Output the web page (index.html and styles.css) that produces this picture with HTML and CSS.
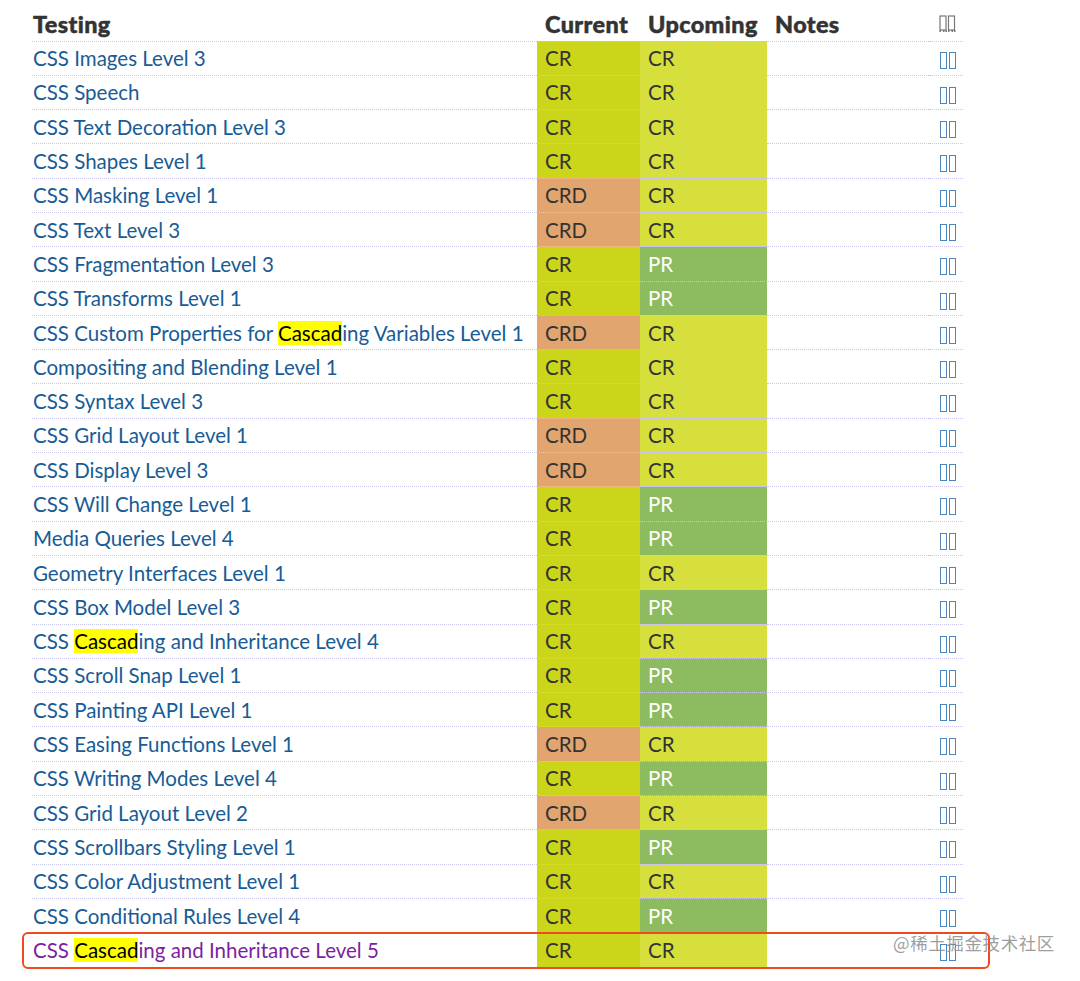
FILE: index.html
```html
<!DOCTYPE html>
<html>
<head>
<meta charset="utf-8">
<link rel="stylesheet" href="styles.css">
</head>
<body>
<div class="wrap">
<table class="specs">
<thead>
<tr><th class="c-name">Testing</th><th class="c-cur">Current</th><th class="c-up">Upcoming</th><th class="c-notes">Notes</th><th class="c-ico"><svg class="ico-h" width="17" height="18" viewBox="0 0 17 18"><rect x="1" y="1" width="6" height="14" fill="none" stroke="#777" stroke-width="1.2"/><rect x="9.5" y="1" width="6" height="14" fill="none" stroke="#777" stroke-width="1.2"/><g fill="#777"><rect x="0.5" y="15" width="1.5" height="2"/><rect x="4" y="15" width="1.5" height="2"/><rect x="6.5" y="15" width="1.5" height="2"/><rect x="9" y="15" width="1.5" height="2"/><rect x="12.5" y="15" width="1.5" height="2"/><rect x="15" y="15" width="1.5" height="2"/></g></svg></th></tr>
</thead>
<tbody>
<tr><td><a>CSS Images Level 3</a></td><td class="cur cr">CR</td><td class="up cr">CR</td><td></td><td class="ic"><i class="tofu"></i><i class="tofu"></i></td></tr>
<tr><td><a>CSS Speech</a></td><td class="cur cr">CR</td><td class="up cr">CR</td><td></td><td class="ic"><i class="tofu"></i><i class="tofu"></i></td></tr>
<tr><td><a>CSS Text Decoration Level 3</a></td><td class="cur cr">CR</td><td class="up cr">CR</td><td></td><td class="ic"><i class="tofu"></i><i class="tofu"></i></td></tr>
<tr><td><a>CSS Shapes Level 1</a></td><td class="cur cr">CR</td><td class="up cr">CR</td><td></td><td class="ic"><i class="tofu"></i><i class="tofu"></i></td></tr>
<tr><td><a>CSS Masking Level 1</a></td><td class="cur crd">CRD</td><td class="up cr">CR</td><td></td><td class="ic"><i class="tofu"></i><i class="tofu"></i></td></tr>
<tr><td><a>CSS Text Level 3</a></td><td class="cur crd">CRD</td><td class="up cr">CR</td><td></td><td class="ic"><i class="tofu"></i><i class="tofu"></i></td></tr>
<tr><td><a>CSS Fragmentation Level 3</a></td><td class="cur cr">CR</td><td class="up pr">PR</td><td></td><td class="ic"><i class="tofu"></i><i class="tofu"></i></td></tr>
<tr><td><a>CSS Transforms Level 1</a></td><td class="cur cr">CR</td><td class="up pr">PR</td><td></td><td class="ic"><i class="tofu"></i><i class="tofu"></i></td></tr>
<tr><td><a>CSS Custom Properties for <mark>Cascad</mark>ing Variables Level 1</a></td><td class="cur crd">CRD</td><td class="up cr">CR</td><td></td><td class="ic"><i class="tofu"></i><i class="tofu"></i></td></tr>
<tr><td><a>Compositing and Blending Level 1</a></td><td class="cur cr">CR</td><td class="up cr">CR</td><td></td><td class="ic"><i class="tofu"></i><i class="tofu"></i></td></tr>
<tr><td><a>CSS Syntax Level 3</a></td><td class="cur cr">CR</td><td class="up cr">CR</td><td></td><td class="ic"><i class="tofu"></i><i class="tofu"></i></td></tr>
<tr><td><a>CSS Grid Layout Level 1</a></td><td class="cur crd">CRD</td><td class="up cr">CR</td><td></td><td class="ic"><i class="tofu"></i><i class="tofu"></i></td></tr>
<tr><td><a>CSS Display Level 3</a></td><td class="cur crd">CRD</td><td class="up cr">CR</td><td></td><td class="ic"><i class="tofu"></i><i class="tofu"></i></td></tr>
<tr><td><a>CSS Will Change Level 1</a></td><td class="cur cr">CR</td><td class="up pr">PR</td><td></td><td class="ic"><i class="tofu"></i><i class="tofu"></i></td></tr>
<tr><td><a>Media Queries Level 4</a></td><td class="cur cr">CR</td><td class="up pr">PR</td><td></td><td class="ic"><i class="tofu"></i><i class="tofu"></i></td></tr>
<tr><td><a>Geometry Interfaces Level 1</a></td><td class="cur cr">CR</td><td class="up cr">CR</td><td></td><td class="ic"><i class="tofu"></i><i class="tofu"></i></td></tr>
<tr><td><a>CSS Box Model Level 3</a></td><td class="cur cr">CR</td><td class="up pr">PR</td><td></td><td class="ic"><i class="tofu"></i><i class="tofu"></i></td></tr>
<tr><td><a>CSS <mark>Cascad</mark>ing and Inheritance Level 4</a></td><td class="cur cr">CR</td><td class="up cr">CR</td><td></td><td class="ic"><i class="tofu"></i><i class="tofu"></i></td></tr>
<tr><td><a>CSS Scroll Snap Level 1</a></td><td class="cur cr">CR</td><td class="up pr">PR</td><td></td><td class="ic"><i class="tofu"></i><i class="tofu"></i></td></tr>
<tr><td><a>CSS Painting API Level 1</a></td><td class="cur cr">CR</td><td class="up pr">PR</td><td></td><td class="ic"><i class="tofu"></i><i class="tofu"></i></td></tr>
<tr><td><a>CSS Easing Functions Level 1</a></td><td class="cur crd">CRD</td><td class="up cr">CR</td><td></td><td class="ic"><i class="tofu"></i><i class="tofu"></i></td></tr>
<tr><td><a>CSS Writing Modes Level 4</a></td><td class="cur cr">CR</td><td class="up pr">PR</td><td></td><td class="ic"><i class="tofu"></i><i class="tofu"></i></td></tr>
<tr><td><a>CSS Grid Layout Level 2</a></td><td class="cur crd">CRD</td><td class="up cr">CR</td><td></td><td class="ic"><i class="tofu"></i><i class="tofu"></i></td></tr>
<tr><td><a>CSS Scrollbars Styling Level 1</a></td><td class="cur cr">CR</td><td class="up pr">PR</td><td></td><td class="ic"><i class="tofu"></i><i class="tofu"></i></td></tr>
<tr><td><a>CSS Color Adjustment Level 1</a></td><td class="cur cr">CR</td><td class="up cr">CR</td><td></td><td class="ic"><i class="tofu"></i><i class="tofu"></i></td></tr>
<tr><td><a>CSS Conditional Rules Level 4</a></td><td class="cur cr">CR</td><td class="up pr">PR</td><td></td><td class="ic"><i class="tofu"></i><i class="tofu"></i></td></tr>
<tr class="last"><td><a class="visited">CSS <mark>Cascad</mark>ing and Inheritance Level 5</a></td><td class="cur cr">CR</td><td class="up cr">CR</td><td></td><td class="ic"><i class="tofu"></i><i class="tofu"></i></td></tr>
</tbody>
</table>
<div class="callout"></div>
<div class="watermark">@稀土掘金技术社区</div>
</div>
</body>
</html>
```

FILE: styles.css
```css
html, body {
  margin: 0;
  padding: 0;
  background: #fff;
}
body {
  font-family: Lato, "Open Sans", sans-serif;
}
.wrap {
  position: relative;
  padding: 7px 0 0 32px;
  width: 1048px;
  height: 974px;
}
.specs {
  border-collapse: collapse;
  table-layout: fixed;
  width: 931px;
}
.specs th, .specs td {
  padding: 0 0 0 8px;
  height: 34.3px;
  box-sizing: border-box;
  border-bottom: 1px dotted #c9c6ee;
  text-align: left;
  white-space: nowrap;
  vertical-align: middle;
}
.specs th {
  font-weight: 900;
  font-size: 23.4px;
  color: #333;
  height: 34px;
  padding-top: 0;
  letter-spacing: 0.4px;
  -webkit-text-stroke: 0.5px #333;
}
.specs th.c-name, .specs td:first-child {
  padding-left: 1px;
}
.c-name { width: 505px; }
.c-cur { width: 103px; }
.c-up { width: 127px; }
.c-notes { width: 162px; }
.c-ico { width: 34px; }
.specs th.c-ico, .specs td.ic {
  padding: 0 7px 0 0;
  text-align: right;
}
.specs th.c-ico svg {
  margin-left: auto;
}
.specs td {
  font-size: 20.5px;
  color: #333;
}
.specs a {
  color: #175c96;
}
.specs a.visited {
  color: #7b1fa2;
}
mark {
  background: #ffff00;
  color: #000;
}
.specs td.cur.cr { background: #cbd519; }
.specs td.up.cr { background: #d6df3c; }
.specs td.crd { background: #e2a56f; }
.specs td.pr { background: #8dbb5f; color: #fff; }
.ico-h { display: block; }
.tofu {
  display: inline-block;
  width: 5px;
  height: 15px;
  border: 1.3px solid #4a86c0;
  margin-left: 2px;
  vertical-align: middle;
}
.callout {
  position: absolute;
  left: 22px;
  top: 932px;
  width: 968px;
  height: 37px;
  box-sizing: border-box;
  border: 2.5px solid #ee4a1d;
  border-radius: 6px;
}
.watermark {
  position: absolute;
  left: 893px;
  top: 930px;
  font-family: "Noto Sans CJK SC", sans-serif;
  font-size: 17.5px;
  color: rgba(140,140,140,0.85);
  letter-spacing: 0.6px;
}
```
